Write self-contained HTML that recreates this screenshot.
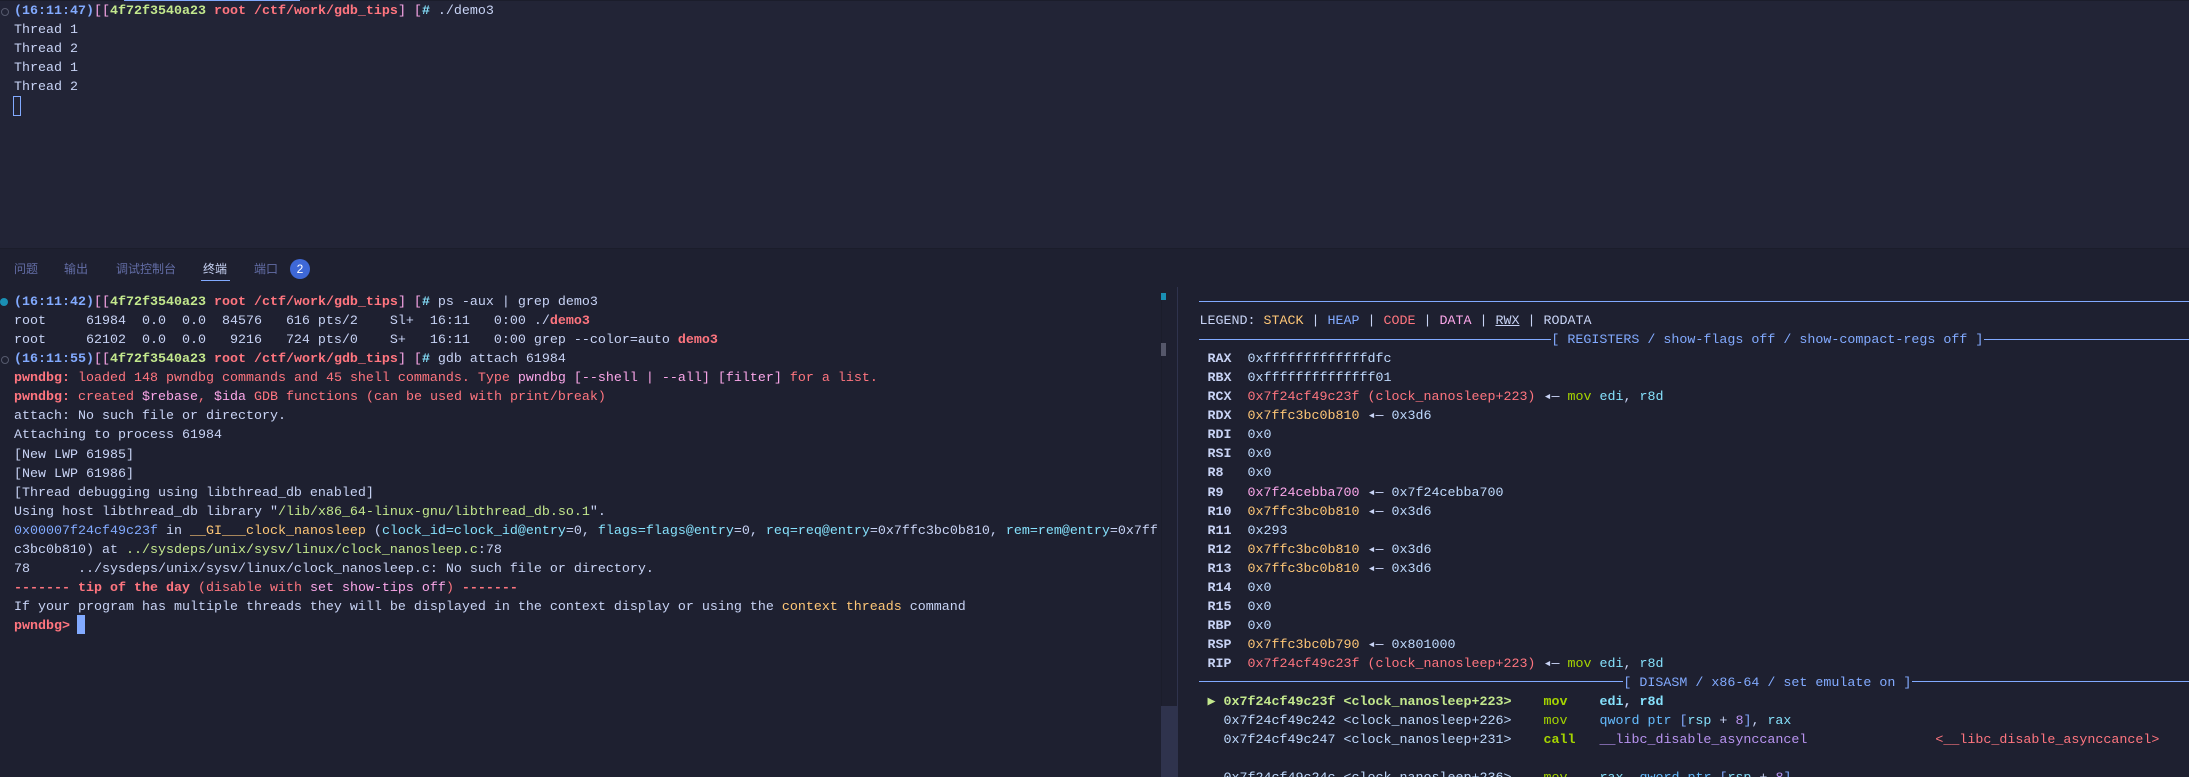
<!DOCTYPE html>
<html><head><meta charset="utf-8">
<style>
html,body{margin:0;padding:0;width:2189px;height:777px;overflow:hidden;background:#1e2030}
#top{position:absolute;left:0;top:0;width:2189px;height:248px;background:#222436}
.abs{position:absolute}
pre{position:absolute;margin:0;font-family:"Liberation Mono",monospace;font-size:13.333px;line-height:19.06px;color:#c8d3f5;white-space:pre;font-variant-ligatures:none}
b{font-weight:700}
.bl{color:#82aaff}.pk{color:#fca7ea}.gr{color:#c3e88d}.rd{color:#ff757f}.cy{color:#86e1fc}.ye{color:#ffc777}.sk{color:#65bcff}
.mv{color:#a6d500}.pu{color:#b994f1}.val{color:#c0dbff}.mg{color:#fca7ea}
.ar{line-height:0;font-family:"DejaVu Sans Mono","Liberation Mono",monospace;color:#c8d3f5}
.tab{position:absolute;top:261px;font:12px/16px "Liberation Sans","Noto Sans CJK SC",sans-serif;color:#636da6;white-space:nowrap}
</style></head><body>
<div id="top"></div>
<div class="abs" style="left:0;top:0;width:2189px;height:1px;background:#1b1d2b"></div>
<div class="abs" style="left:124px;top:0;width:176px;height:1px;background:#82aaff"></div>
<div class="abs" style="left:0;top:248px;width:2189px;height:1px;background:#1b1d2b"></div>

<div class="abs" style="left:1px;top:8px;width:6px;height:6px;border:1px solid #565a6e;border-radius:50%;box-sizing:content-box"></div>
<pre style="left:14px;top:2px;line-height:19px"><b class="bl">(16:11:47)</b><span class="pk">[[</span><b class="gr">4f72f3540a23</b><b class="rd"> root /ctf/work/gdb_tips</b><span class="pk">] [</span><b class="cy">#</b> ./demo3
Thread 1
Thread 2
Thread 1
Thread 2</pre>
<div class="abs" style="left:13px;top:96px;width:6px;height:18px;border:1px solid #82aaff"></div>

<div class="tab" style="left:14px">问题</div>
<div class="tab" style="left:64px">输出</div>
<div class="tab" style="left:116px">调试控制台</div>
<div class="tab" style="left:203px;color:#c8d3f5">终端</div>
<div class="abs" style="left:201px;top:280px;width:29px;height:1px;background:#82aaff"></div>
<div class="tab" style="left:254px">端口</div>
<div class="abs" style="left:290px;top:259px;width:20px;height:20px;border-radius:50%;background:#3e68d7;color:#fff;font:12px/20px 'Liberation Sans',sans-serif;text-align:center">2</div>

<div class="abs" style="left:0;top:298px;width:8px;height:8px;border-radius:50%;background:#1a8fb4"></div>
<div class="abs" style="left:1px;top:356px;width:6px;height:6px;border:1px solid #565a6e;border-radius:50%"></div>

<pre style="left:14px;top:293px"><b class="bl">(16:11:42)</b><span class="pk">[[</span><b class="gr">4f72f3540a23</b><b class="rd"> root /ctf/work/gdb_tips</b><span class="pk">] [</span><b class="cy">#</b> ps -aux | grep demo3
root     61984  0.0  0.0  84576   616 pts/2    Sl+  16:11   0:00 ./<b class="rd">demo3</b>
root     62102  0.0  0.0   9216   724 pts/0    S+   16:11   0:00 grep --color=auto <b class="rd">demo3</b>
<b class="bl">(16:11:55)</b><span class="pk">[[</span><b class="gr">4f72f3540a23</b><b class="rd"> root /ctf/work/gdb_tips</b><span class="pk">] [</span><b class="cy">#</b> gdb attach 61984
<b class="rd">pwndbg: </b><span class="rd">loaded 148 pwndbg commands and 45 shell commands. Type </span><span class="pk">pwndbg [--shell | --all] [filter]</span><span class="rd"> for a list.</span>
<b class="rd">pwndbg: </b><span class="rd">created </span><span class="pk">$rebase</span><span class="rd">, </span><span class="pk">$ida</span><span class="rd"> GDB functions (can be used with print/break)</span>
attach: No such file or directory.
Attaching to process 61984
[New LWP 61985]
[New LWP 61986]
[Thread debugging using libthread_db enabled]
Using host libthread_db library "<span class="gr">/lib/x86_64-linux-gnu/libthread_db.so.1</span>".
<span class="bl">0x00007f24cf49c23f</span> in <span class="ye">__GI___clock_nanosleep</span> (<span class="cy">clock_id=clock_id@entry</span>=0, <span class="cy">flags=flags@entry</span>=0, <span class="cy">req=req@entry</span>=0x7ffc3bc0b810, <span class="cy">rem=rem@entry</span>=0x7ff
c3bc0b810) at <span class="gr">../sysdeps/unix/sysv/linux/clock_nanosleep.c</span>:78
78      ../sysdeps/unix/sysv/linux/clock_nanosleep.c: No such file or directory.
<b class="rd">------- tip of the day</b><span class="rd"> (disable with </span><span class="pk">set show-tips off</span><span class="rd">)</span><b class="rd"> -------</b>
If your program has multiple threads they will be displayed in the context display or using the <span class="ye">context threads</span> command
<b class="rd">pwndbg&gt;</b></pre>
<div class="abs" style="left:77px;top:615px;width:8px;height:19px;background:#82aaff"></div>

<div class="abs" style="left:1161px;top:293px;width:1px;height:413px;background:#1b1d2b"></div>
<div class="abs" style="left:1161px;top:293px;width:5px;height:7px;background:#1a8fb4"></div>
<div class="abs" style="left:1161px;top:343px;width:5px;height:13px;background:#55576a"></div>
<div class="abs" style="left:1161px;top:706px;width:16px;height:71px;background:#2f334d"></div>
<div class="abs" style="left:1177px;top:287px;width:1px;height:490px;background:#2f334d"></div>

<div class="abs" style="left:1199px;top:301px;width:990px;height:1px;background:#82aaff"></div>
<div class="abs" style="left:1199px;top:339px;width:352px;height:1px;background:#82aaff"></div>
<div class="abs" style="left:1984px;top:339px;width:205px;height:1px;background:#82aaff"></div>
<div class="abs" style="left:1199px;top:681px;width:424px;height:1px;background:#82aaff"></div>
<div class="abs" style="left:1912px;top:681px;width:277px;height:1px;background:#82aaff"></div>

<pre style="left:1199.5px;top:312px">LEGEND: <span class="ye">STACK</span> | <span class="bl">HEAP</span> | <span class="rd">CODE</span> | <span class="pk">DATA</span> | <u>RWX</u> | RODATA</pre>
<div class="abs" style="left:1199.5px;top:0;width:990px;height:777px;overflow:hidden">
<pre style="left:0;top:331px"><span class="bl">                                            [ REGISTERS / show-flags off / show-compact-regs off ]</span>
 <b>RAX</b>  <span class="val">0xfffffffffffffdfc</span>
 <b>RBX</b>  <span class="val">0xffffffffffffff01</span>
 <b>RCX</b>  <span class="rd">0x7f24cf49c23f (clock_nanosleep+223)</span> <span class="ar">◂—</span> <span class="mv">mov</span> <span class="cy">edi</span>, <span class="cy">r8d</span>
 <b>RDX</b>  <span class="ye">0x7ffc3bc0b810</span> <span class="ar">◂—</span> <span class="val">0x3d6</span>
 <b>RDI</b>  <span class="val">0x0</span>
 <b>RSI</b>  <span class="val">0x0</span>
 <b>R8 </b>  <span class="val">0x0</span>
 <b>R9 </b>  <span class="pk">0x7f24cebba700</span> <span class="ar">◂—</span> <span class="val">0x7f24cebba700</span>
 <b>R10</b>  <span class="ye">0x7ffc3bc0b810</span> <span class="ar">◂—</span> <span class="val">0x3d6</span>
 <b>R11</b>  <span class="val">0x293</span>
 <b>R12</b>  <span class="ye">0x7ffc3bc0b810</span> <span class="ar">◂—</span> <span class="val">0x3d6</span>
 <b>R13</b>  <span class="ye">0x7ffc3bc0b810</span> <span class="ar">◂—</span> <span class="val">0x3d6</span>
 <b>R14</b>  <span class="val">0x0</span>
 <b>R15</b>  <span class="val">0x0</span>
 <b>RBP</b>  <span class="val">0x0</span>
 <b>RSP</b>  <span class="ye">0x7ffc3bc0b790</span> <span class="ar">◂—</span> <span class="val">0x801000</span>
 <b>RIP</b>  <span class="rd">0x7f24cf49c23f (clock_nanosleep+223)</span> <span class="ar">◂—</span> <span class="mv">mov</span> <span class="cy">edi</span>, <span class="cy">r8d</span>
<span class="bl">                                                     [ DISASM / x86-64 / set emulate on ]</span>
 <span class="gr ar" style="color:#c3e88d">▶</span> <b class="gr">0x7f24cf49c23f &lt;clock_nanosleep+223&gt;</b>    <b class="mv">mov</b>    <b class="cy">edi</b><b>,</b> <b class="cy">r8d</b>
   <span class="val">0x7f24cf49c242</span> <span class="val">&lt;clock_nanosleep+226&gt;</span>    <span class="mv">mov</span>    <span class="sk">qword ptr</span> <span class="bl">[</span><span class="cy">rsp</span> + <span class="pu">8</span><span class="bl">]</span>, <span class="cy">rax</span>
   <span class="val">0x7f24cf49c247</span> <span class="val">&lt;clock_nanosleep+231&gt;</span>    <b class="mv">call</b>   <span class="pu">__libc_disable_asynccancel</span>                <span class="rd">&lt;__libc_disable_asynccancel&gt;</span>

   <span class="val">0x7f24cf49c24c</span> <span class="val">&lt;clock_nanosleep+236&gt;</span>    <span class="mv">mov</span>    <span class="cy">rax</span>, <span class="sk">qword ptr</span> <span class="bl">[</span><span class="cy">rsp</span> + <span class="pu">8</span><span class="bl">]</span></pre>
</div>
</body></html>
